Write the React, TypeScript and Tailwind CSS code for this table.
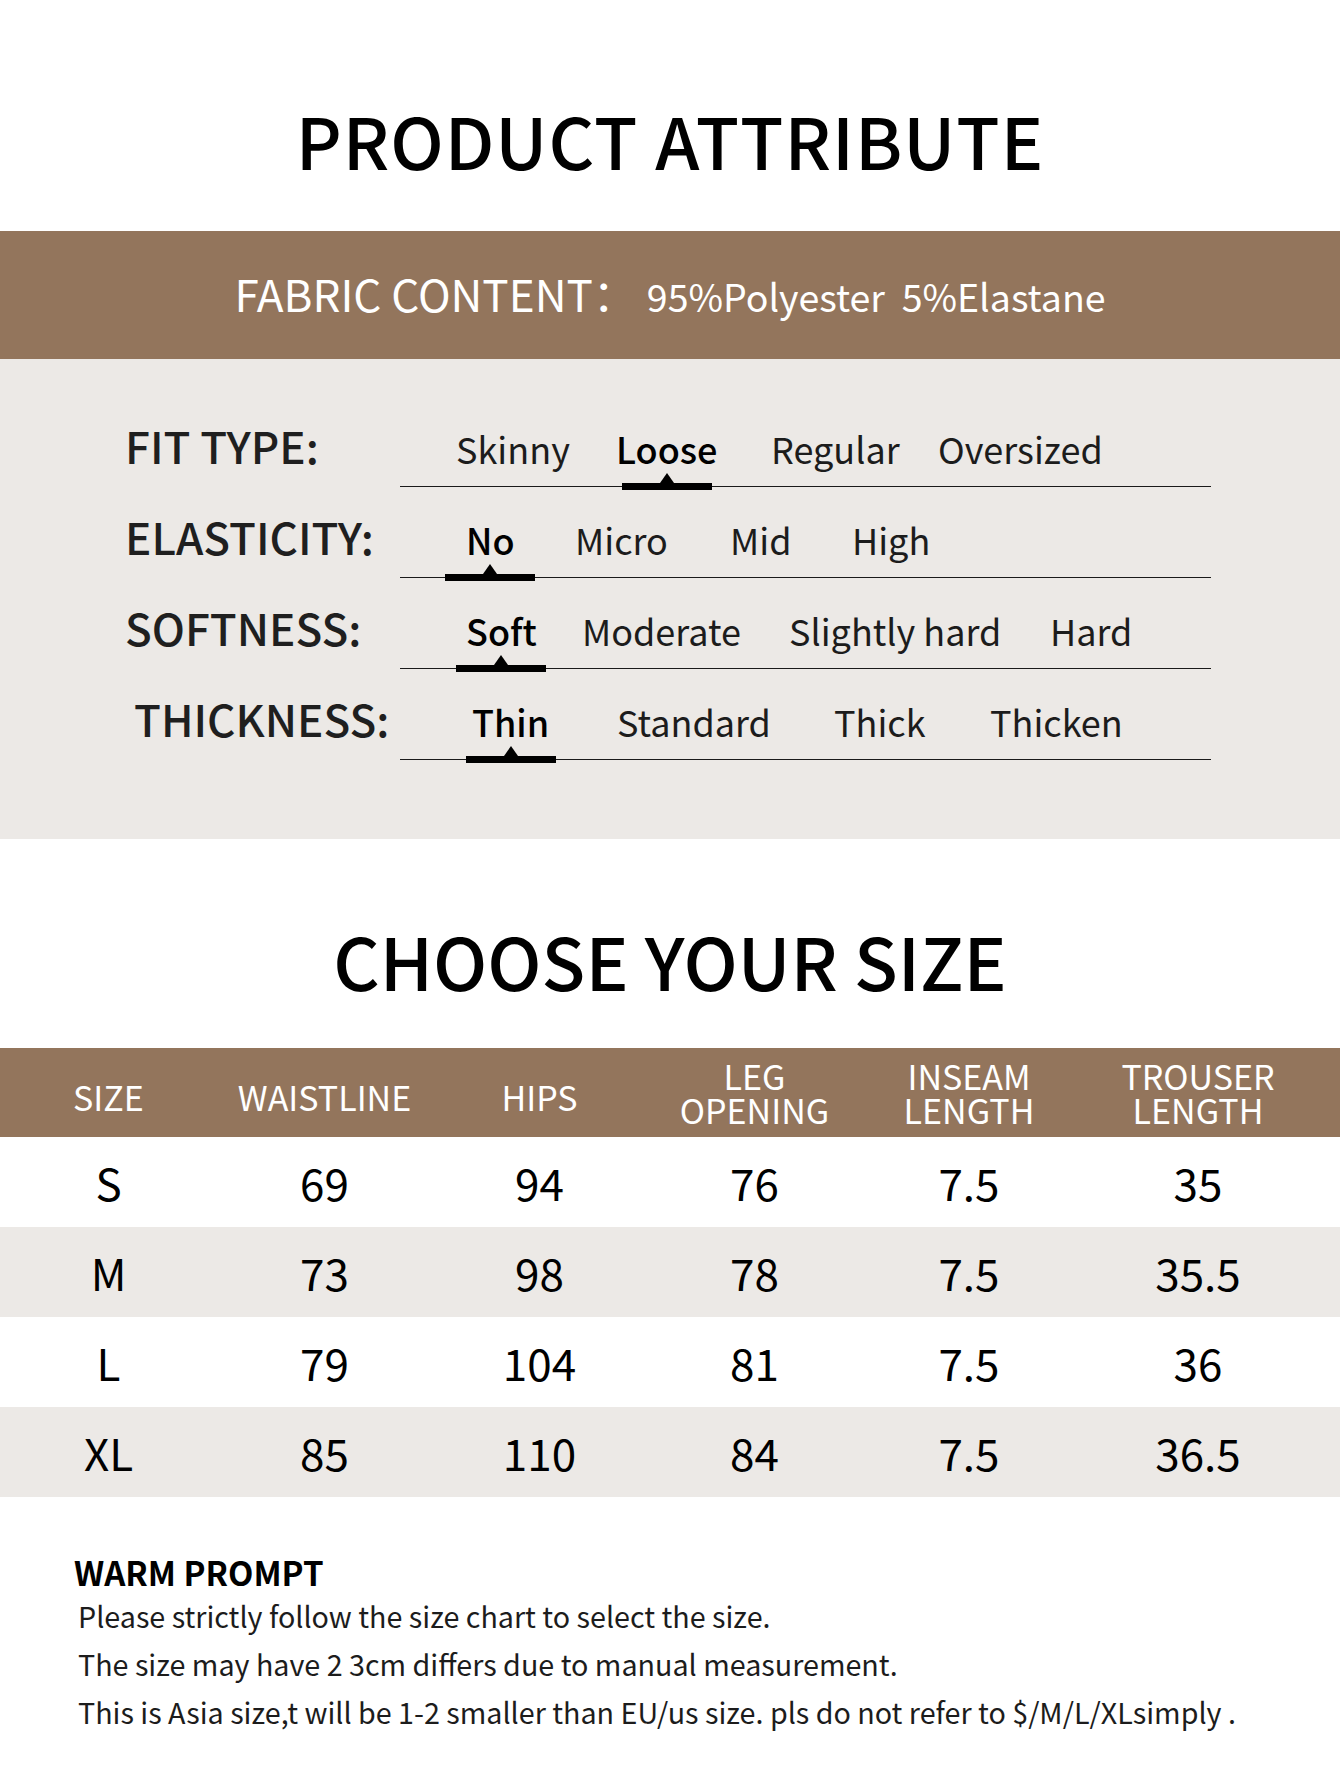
const rows = [
  {
    label: "FIT TYPE:",
    labelPad: "pl-[125px]",
    startPad: "pl-[56px]",
    selected: 1,
    options: [
      { text: "Skinny", w: "w-[160px]" },
      { text: "Loose", w: "w-[155px]" },
      { text: "Regular", w: "w-[167px]" },
      { text: "Oversized", w: "" },
    ],
  },
  {
    label: "ELASTICITY:",
    labelPad: "pl-[125px]",
    startPad: "pl-[66px]",
    selected: 0,
    options: [
      { text: "No", w: "w-[109px]" },
      { text: "Micro", w: "w-[155px]" },
      { text: "Mid", w: "w-[122px]" },
      { text: "High", w: "" },
    ],
  },
  {
    label: "SOFTNESS:",
    labelPad: "pl-[125px]",
    startPad: "pl-[66px]",
    selected: 0,
    options: [
      { text: "Soft", w: "w-[116px]" },
      { text: "Moderate", w: "w-[207px]" },
      { text: "Slightly hard", w: "w-[261px]" },
      { text: "Hard", w: "" },
    ],
  },
  {
    label: "THICKNESS:",
    labelPad: "pl-[134px]",
    startPad: "pl-[72px]",
    selected: 0,
    options: [
      { text: "Thin", w: "w-[145px]" },
      { text: "Standard", w: "w-[217px]" },
      { text: "Thick", w: "w-[156px]" },
      { text: "Thicken", w: "" },
    ],
  },
];

const columns = [
  { lines: ["SIZE"], w: "w-[217px]" },
  { lines: ["WAISTLINE"], w: "w-[215px]" },
  { lines: ["HIPS"], w: "w-[215px]" },
  { lines: ["LEG", "OPENING"], w: "w-[215px]" },
  { lines: ["INSEAM", "LENGTH"], w: "w-[214px]" },
  { lines: ["TROUSER", "LENGTH"], w: "w-[244px]" },
];

const sizes = [
  ["S", "69", "94", "76", "7.5", "35"],
  ["M", "73", "98", "78", "7.5", "35.5"],
  ["L", "79", "104", "81", "7.5", "36"],
  ["XL", "85", "110", "84", "7.5", "36.5"],
];

function Marker() {
  return (
    <span className="absolute left-1/2 top-[calc(100%-1px)] flex -translate-x-1/2 flex-col items-center">
      <span className="h-0 w-0 border-x-[7px] border-b-[10px] border-x-transparent border-b-black" />
      <span className="h-[7px] w-[90px] bg-black" />
    </span>
  );
}

export default function App() {
  return (
    <div className="w-[1340px] bg-white font-['Noto_Sans_CJK_SC','Noto_Sans',sans-serif] text-[#1c1c1c]">
      {/* product attribute */}
      <div className="h-[231px] pt-[104px] text-center text-[71px] font-medium leading-none tracking-[1px] text-black">
        PRODUCT ATTRIBUTE
      </div>
      <div className="flex h-[128px] items-baseline justify-center gap-[10px] bg-[#93755c] pt-[40px] leading-none text-white">
        <span className="text-[44px]">FABRIC CONTENT：</span>
        <span className="text-[37.5px]">95%Polyester&nbsp; 5%Elastane</span>
      </div>
      <div className="bg-[#ece9e6] pb-[79px] pt-[37px]">
        {rows.map((row) => (
          <div key={row.label} className="flex h-[91px]">
            <div className={`flex w-[400px] items-end pb-[20px] text-[44px] font-medium leading-none text-[#1f1f1f] ${row.labelPad}`}>
              {row.label}
            </div>
            <div className={`flex w-[811px] items-end border-b-[1.5px] border-[#1a1a1a] pb-[20px] text-[36px] leading-none ${row.startPad}`}>
              {row.options.map((opt, i) => (
                <div key={opt.text} className={`shrink-0 ${opt.w}`}>
                  <span className={`relative ${i === row.selected ? "font-medium text-black" : ""}`}>
                    {opt.text}
                    {i === row.selected && <Marker />}
                  </span>
                </div>
              ))}
            </div>
          </div>
        ))}
      </div>

      {/* size chart */}
      <div className="h-[209px] pt-[85px] text-center text-[72px] font-medium leading-none text-black">
        CHOOSE YOUR SIZE
      </div>
      <div className="flex h-[89px] bg-[#93755c] text-[34px] leading-[34px] text-white">
        {columns.map((col) => (
          <div
            key={col.lines.join()}
            className={`flex flex-col items-center justify-center ${col.w} ${col.lines.length === 1 ? "pt-[8px]" : ""}`}
          >
            {col.lines.map((l) => (
              <span key={l}>{l}</span>
            ))}
          </div>
        ))}
      </div>
      {sizes.map((r, ri) => (
        <div key={r[0]} className={`flex h-[90px] items-center text-[44px] leading-none text-black ${ri % 2 === 1 ? "bg-[#ece9e6]" : "bg-white"}`}>
          {r.map((v, ci) => (
            <div key={ci} className={`text-center ${columns[ci].w}`}>
              {v}
            </div>
          ))}
        </div>
      ))}

      {/* warm prompt */}
      <div className="h-[288px] pl-[74px] pt-[59px]">
        <div className="text-[33px] font-bold leading-none text-black">WARM PROMPT</div>
        <div className="mt-[3px] pl-[4px] text-[28.7px] leading-[48px] text-[#1c1c1c]">
          <p>Please strictly follow the size chart to select the size.</p>
          <p>The size may have 2 3cm differs due to manual measurement.</p>
          <p>This is Asia size,t will be 1-2 smaller than EU/us size. pls do not refer to $/M/L/XLsimply .</p>
        </div>
      </div>
    </div>
  );
}
